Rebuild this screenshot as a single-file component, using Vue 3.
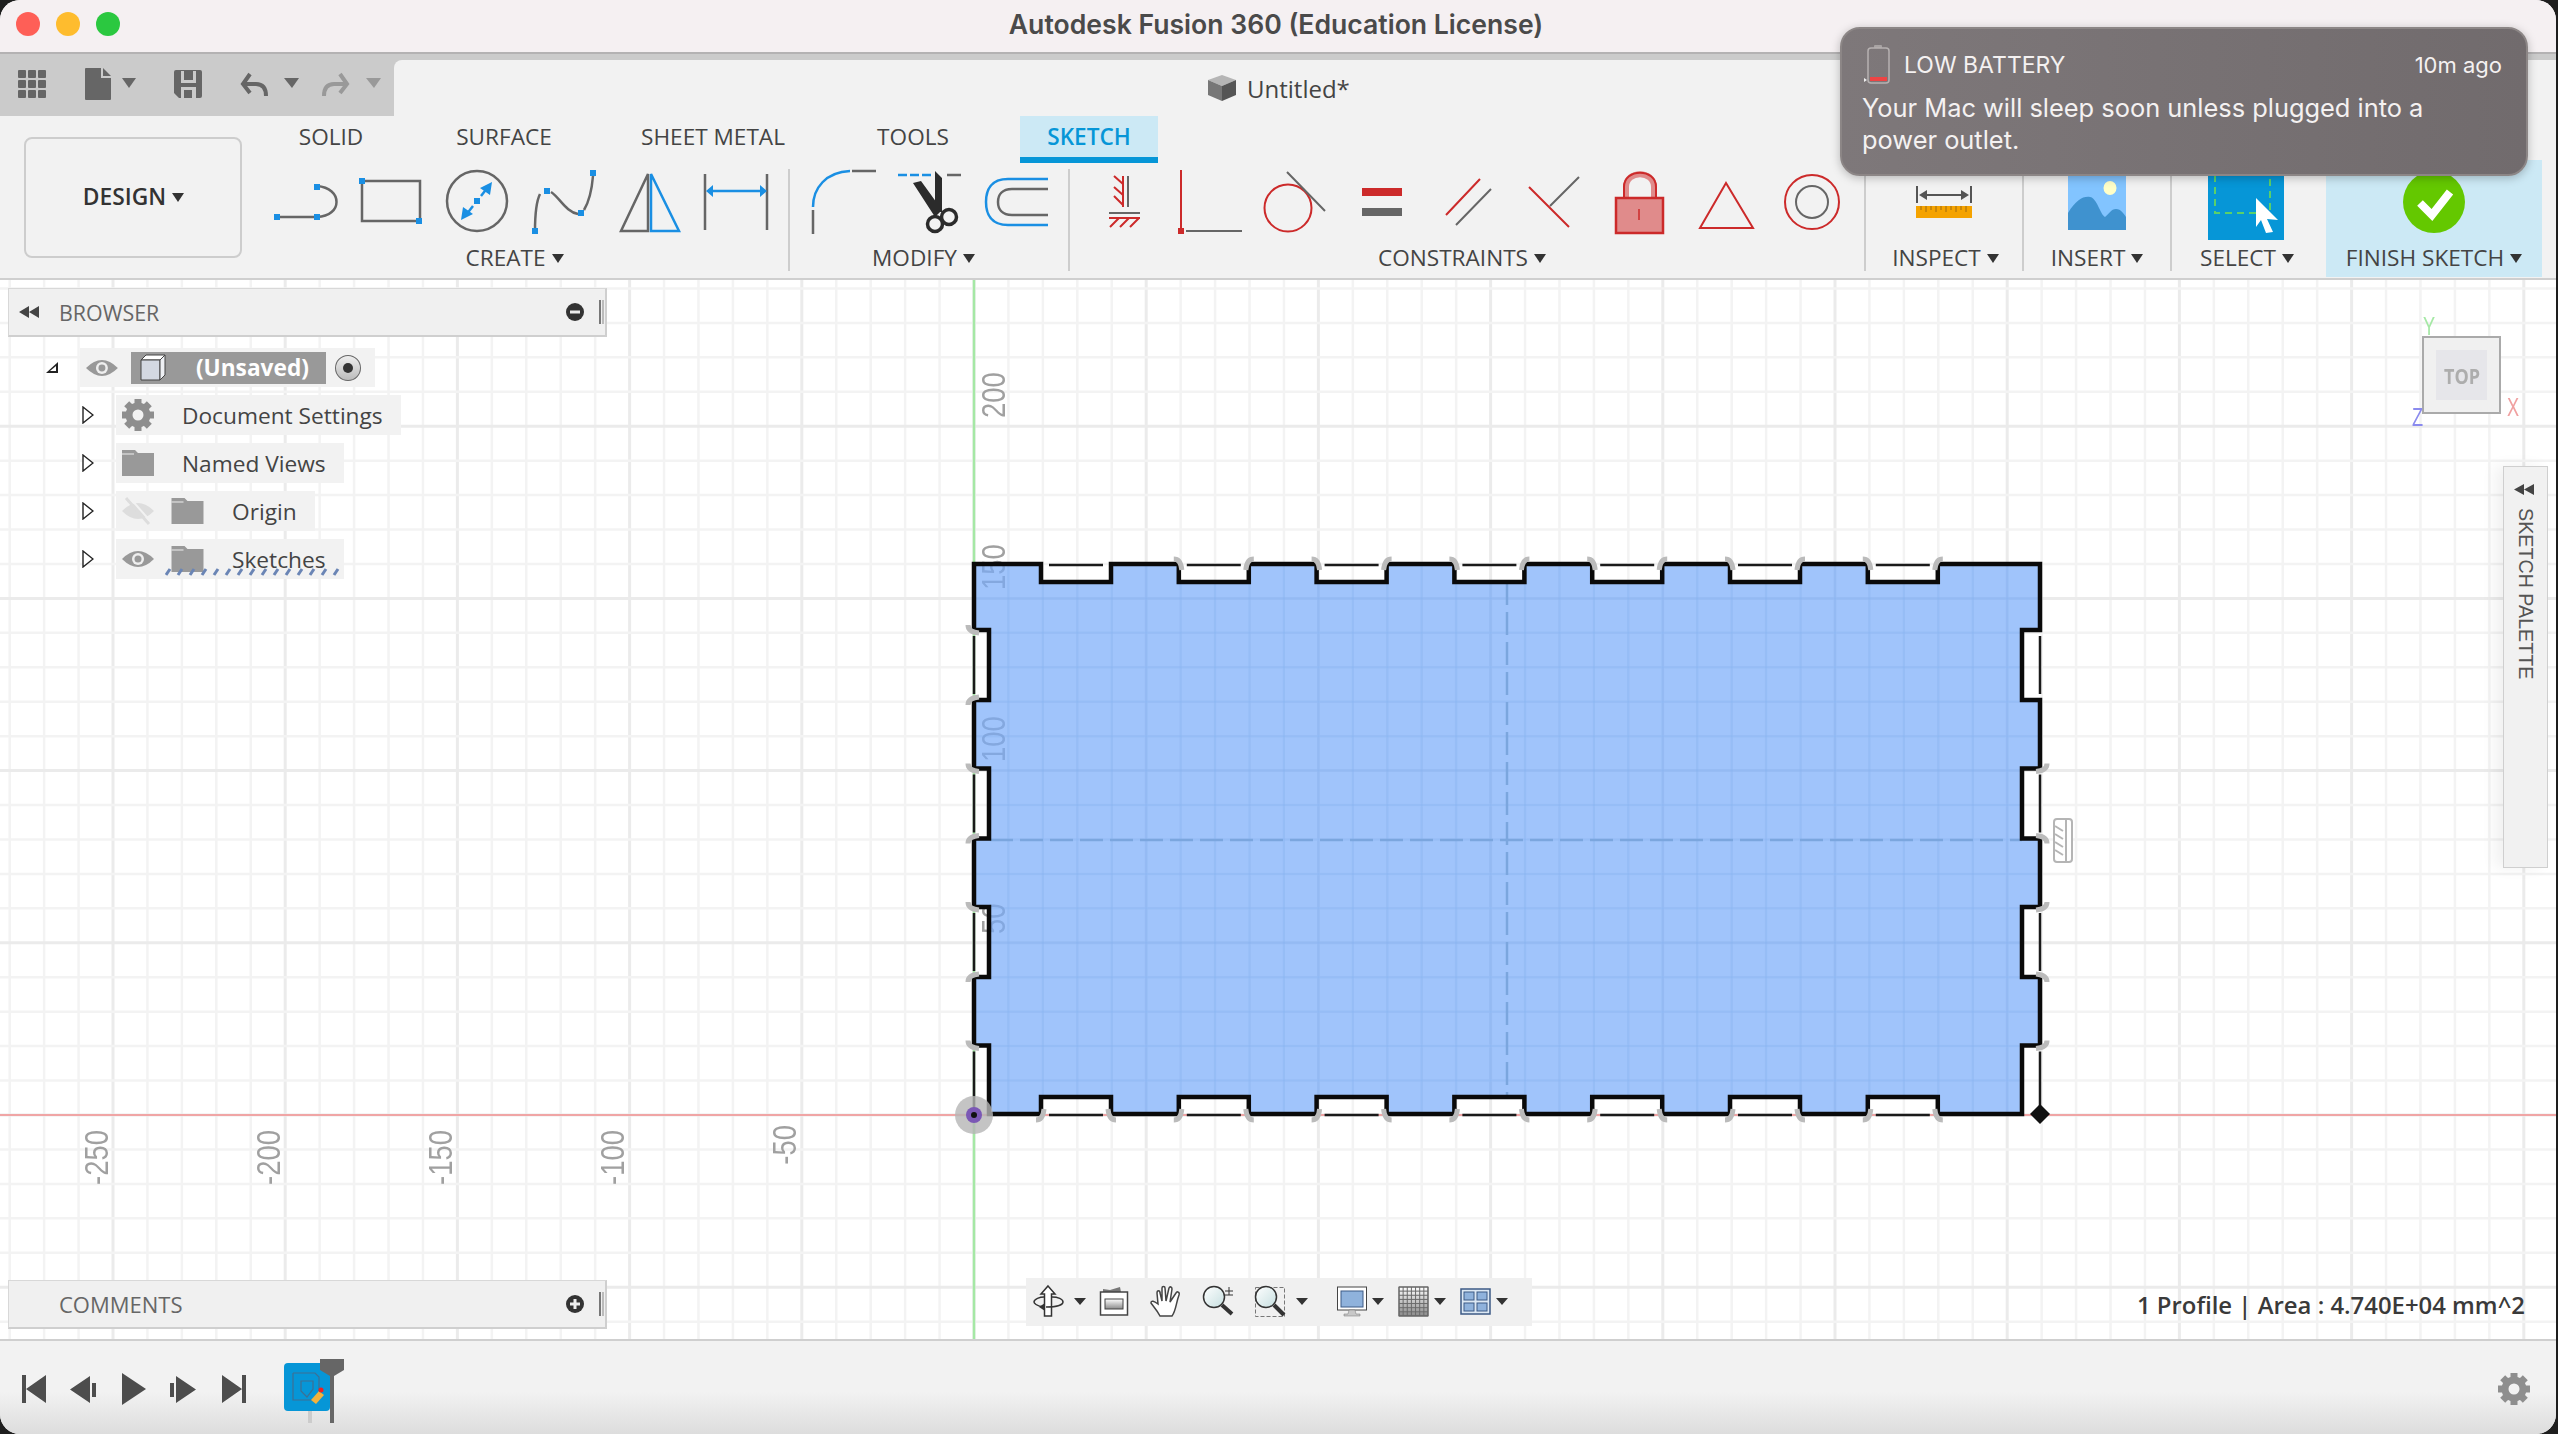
<script setup>
const ORIGIN_X = 974
const ORIGIN_Y = 1115
const STEP = 34.44

const gridX = []
for (let i = -29; i <= 46; i++) gridX.push({ p: ORIGIN_X + i * STEP, major: i % 5 === 0 })
const gridY = []
for (let i = -24; i <= 7; i++) gridY.push({ p: ORIGIN_Y + i * STEP, major: i % 5 === 0 })

const T = 564, B = 1114, L = 974, R = 2040
const topX = [0, 1, 2, 3, 4, 5, 6].map((i) => 1041 + i * 137.8)
const sideY = [630, 768.5, 907, 1045.5]
let d = `M${L} ${T}`
for (const x of topX) d += `L${x} ${T}L${x} ${T + 18}L${x + 70} ${T + 18}L${x + 70} ${T}`
d += `L${R} ${T}`
sideY.forEach((y, i) => {
  d += `L${R} ${y}L${R - 18} ${y}`
  if (i < 3) d += `L${R - 18} ${y + 70}L${R} ${y + 70}`
})
d += `L${R - 18} ${B}`
for (const x of [...topX].reverse()) d += `L${x + 70} ${B}L${x + 70} ${B - 17}L${x} ${B - 17}L${x} ${B}`
d += `L${L + 15} ${B}`
;[...sideY].reverse().forEach((y, i) => {
  if (i > 0) d += `L${L} ${y + 70}L${L + 15} ${y + 70}`
  d += `L${L + 15} ${y}L${L} ${y}`
})
d += 'Z'
const profile = d

let thin = ''
for (const x of topX) thin += `M${x + 8} ${T + 1}H${x + 62}M${x + 8} ${B + 1}H${x + 62}`
sideY.forEach((y, i) => {
  const end = i === 3 ? B : y + 64
  thin += `M${L} ${y + 6}V${end}M${R} ${y + 6}V${end}`
})

let arcs = ''
topX.forEach((x, i) => {
  if (i > 0) arcs += `M${x - 5} ${T - 5}q7 0 8 11M${x + 67} ${T + 6}q1 -11 8 -11`
  arcs += `M${x - 5} ${B + 6}q7 0 8 -11M${x + 67} ${B - 5}q1 11 8 11`
})
sideY.forEach((y, i) => {
  arcs += `M${L - 6} ${y - 5}q0 7 11 8`
  if (i < 3) arcs += `M${L - 6} ${y + 75}q0 -7 11 -8`
  if (i > 0) arcs += `M${R + 7} ${y - 5}q0 7 -11 8`
  if (i > 0 && i < 3) arcs += `M${R + 7} ${y + 75}q0 -7 -11 -8`
})

const yLabels = [
  { t: '200', y: 427 - 9 },
  { t: '150', y: 599 - 9 },
  { t: '100', y: 771 - 9 },
  { t: '50', y: 943 - 9 },
]
const xLabels = [
  { t: '-250', x: 108, y: 1130 },
  { t: '-200', x: 280, y: 1130 },
  { t: '-150', x: 452, y: 1130 },
  { t: '-100', x: 624, y: 1130 },
  { t: '-50', x: 796, y: 1125 },
]
const waves = Array.from({ length: 15 }, (_, i) => i * 12)
const teeth = [0, 45, 90, 135, 180, 225, 270, 315]
const gridCells = [0, 1, 2, 3, 4, 5, 6, 7]
const tabs = ['SOLID', 'SURFACE', 'SHEET METAL', 'TOOLS']
</script>

<template>
  <div class="window">
    <header class="titlebar">
      <i class="light red"></i><i class="light amber"></i><i class="light green"></i>
      <span class="title">Autodesk Fusion 360 (Education License)</span>
    </header>

    <div class="strip">
      <svg class="quick" width="394" height="64" viewBox="0 52 394 64">
        <g fill="#666">
          <rect x="18" y="70" width="8" height="8" rx="1" /><rect x="28" y="70" width="8" height="8" rx="1" /><rect x="38" y="70" width="8" height="8" rx="1" />
          <rect x="18" y="80" width="8" height="8" rx="1" /><rect x="28" y="80" width="8" height="8" rx="1" /><rect x="38" y="80" width="8" height="8" rx="1" />
          <rect x="18" y="90" width="8" height="8" rx="1" /><rect x="28" y="90" width="8" height="8" rx="1" /><rect x="38" y="90" width="8" height="8" rx="1" />
          <path d="M86 68h15v10h10v21a1 1 0 0 1-1 1H86a1 1 0 0 1-1-1V69a1 1 0 0 1 1-1zM103 68l8 8h-8z" />
          <path d="M122 78h14l-7 10z" />
          <path fill-rule="evenodd" d="M176 70h24a2 2 0 0 1 2 2v24a2 2 0 0 1-2 2h-21l-5-5V72a2 2 0 0 1 2-2zM181 71v12h15V71h-3v9h-9v-9zM181 98h15V87h-15zM184 98v-8h8v8z" />
          <path d="M284 78h15l-7 10z" />
        </g>
        <path d="M250 74l-7 10 7 9M244 84h12c7 0 10 4 10 12" fill="none" stroke="#666" stroke-width="4" />
        <g fill="none" stroke="#999" stroke-width="4"><path d="M340 74l7 10-7 9M346 84h-12c-7 0-10 4-10 12" /></g>
        <path d="M366 78h15l-7 10z" fill="#999" />
      </svg>
      <div class="doc-tab">
        <svg width="32" height="30" viewBox="0 0 32 30">
          <path d="M2 7l14-5 14 5-14 6z" fill="#b5b5b5" />
          <path d="M2 7l14 6v15L2 22z" fill="#777" />
          <path d="M30 7L16 13v15l14-6z" fill="#555" />
        </svg>
        <span>Untitled*</span>
      </div>
    </div>

    <section class="ribbon">
      <button class="design">DESIGN<i class="caret"></i></button>
      <div class="ribbon-main">
        <nav class="tabs">
          <span v-for="t in tabs" :key="t" class="tab">{{ t }}</span>
          <span class="active">SKETCH</span>
        </nav>
        <div class="groups">
          <div class="group w-create">
            <svg width="526" height="80" viewBox="262 163 526 80">
              <g fill="none" stroke="#666" stroke-width="2.5">
                <path d="M277 217H317M317 186C343 188 343 216 317 217" />
                <path d="M362 181H420V221H362Z" />
                <ellipse cx="477" cy="201" rx="30" ry="30" />
                <path d="M535 231C535 215 537 200 540 194M551 192C560 198 566 212 578 214M584 210C590 200 592 188 593 176" />
                <path d="M648 174L621 231H648Z" />
                <path d="M705 174V230M767 174V230" />
              </g>
              <g fill="none" stroke="#1a8fe3" stroke-width="2.5">
                <path d="M651 174L679 231H651Z" />
                <path d="M709 191H763" />
                <path d="M466 215L473 206M481 196L488 187" />
              </g>
              <g fill="#1a8fe3">
                <path d="M706 191l7-6v12zM767 191l-7-6v12zM492 182l-2 13-10-7zM461 220l2-13 10 7z" />
                <rect x="274" y="214" width="6" height="6" /><rect x="314" y="214" width="6" height="6" /><rect x="314" y="184" width="6" height="6" />
                <rect x="359" y="178" width="6" height="6" /><rect x="416" y="218" width="6" height="6" />
                <rect x="474" y="198" width="6" height="6" />
                <rect x="532" y="228" width="6" height="6" /><rect x="544" y="188" width="6" height="6" /><rect x="578" y="210" width="6" height="6" /><rect x="590" y="170" width="6" height="6" />
              </g>
            </svg>
            <span class="label pr21">CREATE<i class="caret"></i></span>
          </div>
          <i class="sep"></i>
          <div class="group w-modify">
            <svg width="278" height="80" viewBox="790 163 278 80">
              <path d="M813 207C813 188 826 172 850 171" fill="none" stroke="#1a8fe3" stroke-width="2.5" />
              <path d="M813 210V234M852 171H876" fill="none" stroke="#666" stroke-width="2.5" />
              <path d="M898 175H931" stroke="#1a8fe3" stroke-width="2.5" stroke-dasharray="9 3" fill="none" />
              <path d="M947 175H961" stroke="#666" stroke-width="2.5" />
              <path d="M935 171L942 178L942 212L935 212ZM913 183L921 181L942 210L935 217Z" fill="#2b2b2b" />
              <circle cx="935" cy="224" r="7.500" fill="none" stroke="#2b2b2b" stroke-width="3.500" />
              <circle cx="949" cy="217" r="7.500" fill="none" stroke="#2b2b2b" stroke-width="3.500" />
              <path d="M1048 179H1008C991 179 986 190 986 202C986 214 991 225 1008 225H1048" fill="none" stroke="#1a8fe3" stroke-width="2.5" />
              <path d="M1048 189H1012C1002 189 998 195 998 202C998 209 1002 215 1012 215H1048" fill="none" stroke="#666" stroke-width="2.5" />
            </svg>
            <span class="label pr11">MODIFY<i class="caret"></i></span>
          </div>
          <i class="sep"></i>
          <div class="group w-constraints">
            <svg width="794" height="80" viewBox="1070 163 794 80">
              <g fill="none" stroke="#cc2a2a" stroke-width="2">
                <path d="M1123 176V207M1114 176L1123 184M1114 187L1123 195M1114 196L1123 205" />
                <path d="M1109 218H1140M1119 218L1110 227M1129 218L1120 227M1139 218L1130 227" />
                <path d="M1181 170V228" />
                <circle cx="1288" cy="208" r="23.5" />
                <path d="M1480 179L1446 215M1529 187L1569 227" />
                <path d="M1726 183L1700 228H1753Z" />
                <circle cx="1812" cy="202" r="27" />
              </g>
              <g fill="none" stroke="#666" stroke-width="2">
                <path d="M1128 176V207M1109 213H1140M1186 231H1242M1287 172L1325 211" />
                <path d="M1491 189L1456 225M1579 177L1550 206" />
                <circle cx="1812" cy="202" r="16" />
              </g>
              <rect x="1178" y="228" width="6" height="6" fill="#cc2a2a" />
              <rect x="1362" y="188" width="40" height="8" fill="#cc2a2a" />
              <rect x="1362" y="208" width="40" height="8" fill="#666" />
              <path d="M1626 199V187C1626 170 1654 170 1654 187V199" fill="none" stroke="#e08b8b" stroke-width="6" />
              <path d="M1624 199V187C1624 168 1656 168 1656 187V199" fill="none" stroke="#cc2a2a" stroke-width="2" />
              <rect x="1616" y="198" width="47" height="35" fill="#e08b8b" stroke="#cc2a2a" stroke-width="2.5" />
              <path d="M1639 209V220" stroke="#cc2a2a" stroke-width="1.5" />
            </svg>
            <span class="label pr10">CONSTRAINTS<i class="caret"></i></span>
          </div>
          <i class="sep"></i>
          <div class="group w-inspect">
            <svg width="156" height="80" viewBox="1866 163 156 80">
              <path d="M1917 186V203M1971 186V203M1922 195H1966" stroke="#555" stroke-width="2" fill="none" />
              <path d="M1919 195l8-5v10zM1969 195l-8-5v10z" fill="#555" />
              <rect x="1916" y="206" width="56" height="12" fill="#f5a300" />
              <path d="M1921 206v4M1926 206v6M1931 206v4M1936 206v6M1941 206v4M1946 206v6M1951 206v4M1956 206v6M1961 206v4M1966 206v6" stroke="#9c6b12" stroke-width="1" />
            </svg>
            <span class="label pl3">INSPECT<i class="caret"></i></span>
          </div>
          <i class="sep"></i>
          <div class="group w-insert">
            <svg width="146" height="80" viewBox="2024 163 146 80">
              <rect x="2068" y="163" width="58" height="67" fill="#82c4ff" />
              <path d="M2068 213C2076 200 2083 196 2090 197C2097 198 2100 214 2105 217C2109 214 2111 209 2116 209C2121 209 2124 214 2126 217V230H2068Z" fill="#3f92cf" />
              <ellipse cx="2110" cy="188" rx="6.5" ry="7" fill="#ffffc8" />
            </svg>
            <span class="label">INSERT<i class="caret"></i></span>
          </div>
          <i class="sep"></i>
          <div class="group w-select">
            <svg width="154" height="80" viewBox="2172 163 154 80">
              <rect x="2208" y="163" width="76" height="77" fill="#0696d7" />
              <path d="M2215 163V213H2270V163" fill="none" stroke="#5ad06a" stroke-width="2" stroke-dasharray="7 5" />
              <path d="M2256 198L2278 220L2267 219L2273 232L2266 233L2261 220L2256 227Z" fill="#fff" />
            </svg>
            <span class="label pr4">SELECT<i class="caret"></i></span>
          </div>
          <div class="group finish">
            <svg width="216" height="83" viewBox="2326 160 216 83">
              <circle cx="2434" cy="202" r="31" fill="#64c800" />
              <path d="M2420 203L2432 215L2450 192" fill="none" stroke="#fff" stroke-width="8" />
            </svg>
            <span class="label">FINISH SKETCH<i class="caret"></i></span>
          </div>
        </div>
      </div>
    </section>

    <main class="canvas">
      <svg class="scene" width="2558" height="1059" viewBox="0 280 2558 1059">
        <defs>
          <clipPath id="profile-clip"><path :d="profile" /></clipPath>
        </defs>
        <g>
          <path v-for="g in gridX" :key="'x' + g.p" :d="`M${g.p} 280V1339`" :stroke="g.major ? '#ebebeb' : '#f3f3f3'" :stroke-width="g.major ? 3 : 2.5" />
          <path v-for="g in gridY" :key="'y' + g.p" :d="`M0 ${g.p}H2558`" :stroke="g.major ? '#ebebeb' : '#f3f3f3'" :stroke-width="g.major ? 3 : 2.5" />
        </g>
        <path d="M974 280V1339" stroke="#a5e8a5" stroke-width="2.5" />
        <path d="M0 1115H2558" stroke="#f0a5a5" stroke-width="2" />
        <text v-for="l in yLabels" :key="l.t" class="axis" text-anchor="start" :transform="`translate(1005 ${l.y}) rotate(-90) scale(1 1.18)`">{{ l.t }}</text>
        <text v-for="l in xLabels" :key="l.t" class="axis" text-anchor="end" :transform="`translate(${l.x} ${l.y}) rotate(-90) scale(1 1.18)`">{{ l.t }}</text>

        <path :d="profile" fill="#77abf9" fill-opacity=".7" />
        <g clip-path="url(#profile-clip)" stroke="#6f9fe4" stroke-opacity=".13" stroke-width="2">
          <path v-for="g in gridX" :key="'cx' + g.p" :d="`M${g.p} 280V1339`" />
          <path v-for="g in gridY" :key="'cy' + g.p" :d="`M0 ${g.p}H2558`" />
        </g>
        <path d="M1507 582V1097M990 840H2022" stroke="#7ba6de" stroke-width="2.5" stroke-dasharray="23 7" fill="none" />
        <path :d="thin" stroke="#1a1a1a" stroke-width="2.5" fill="none" />
        <path :d="profile" stroke="#0a0a0a" stroke-width="4.500" fill="none" />
        <path :d="arcs" stroke="#bbbbbb" stroke-width="5" fill="none" />

        <circle cx="974" cy="1115" r="19" fill="#b5b5b5" fill-opacity=".8" />
        <circle cx="974" cy="1115" r="8" fill="#7b58b5" />
        <circle cx="974" cy="1115" r="3" fill="#111" />
        <path d="M2040 1104l10 10-10 10-10-10z" fill="#111" />

        <rect x="2054" y="819" width="18" height="43" rx="3" fill="#fff" stroke="#b5b5b5" stroke-width="2" />
        <path d="M2066 820V861M2055 826l8 5M2055 834l8 5M2055 842l8 5M2055 850l8 5" stroke="#b5b5b5" stroke-width="2" fill="none" />

        <text class="axis-l y" transform="translate(2423 335) scale(.7 1)">Y</text>
        <rect x="2423" y="337" width="77" height="76" fill="#f0f0f0" stroke="#aaa" stroke-width="2" />
        <rect x="2436" y="350" width="51" height="50" fill="#e6e6ea" />
        <text class="cube" text-anchor="middle" transform="translate(2462 384) scale(.9 1.1)">TOP</text>
        <text class="axis-l x" transform="translate(2507 416) scale(.7 1)">X</text>
        <text class="axis-l z" transform="translate(2412 426) scale(.7 1)">Z</text>
      </svg>

      <aside class="browser">
        <div class="panel-head">
          <svg width="22" height="12" viewBox="0 0 22 12"><path d="M11 0v12L1 6zM21 0v12L11 6z" fill="#444" /></svg>
          <span class="panel-title">BROWSER</span>
          <svg class="pin-btn" width="18" height="18" viewBox="0 0 18 18"><circle cx="9" cy="9" r="9" fill="#333" /><rect x="4" y="7.5" width="10" height="3" fill="#eee" /></svg>
          <i class="grip"></i>
        </div>
        <div class="tree">
          <div class="row root">
            <svg class="toggle-root" width="14" height="13" viewBox="0 0 14 13"><path d="M13 1V12H1Z" fill="#222" /><path d="M11 5V10H5Z" fill="#fff" /></svg>
            <div class="chip chip-root">
              <svg width="32" height="20" viewBox="0 0 32 20"><path d="M0 10Q16-6 32 10Q16 26 0 10Z" fill="#999" /><circle cx="16" cy="10" r="6" fill="#eee" /><circle cx="16" cy="10" r="3.5" fill="#999" /></svg>
              <div class="selected">
                <svg width="27" height="27" viewBox="0 0 27 27"><path d="M1 6l5-5h19l-5 5z" fill="#fff" stroke="#444" /><path d="M1 6h19v20H1z" fill="#d3d8e2" stroke="#444" /><path d="M20 6l5-5v20l-5 5z" fill="#eef0f4" stroke="#444" /></svg>
                <b>(Unsaved)</b>
              </div>
              <span class="radio"><i></i></span>
            </div>
          </div>
          <div class="row">
            <svg class="toggle" width="12" height="18" viewBox="0 0 12 18"><path d="M1 1L11 9L1 17Z" fill="#fff" stroke="#222" stroke-width="1.4" /></svg>
            <div class="chip">
              <svg width="32" height="32" viewBox="-16 -16 32 32">
                <rect v-for="a in teeth" :key="a" x="-3.5" y="-16" width="7" height="8" fill="#8e8e8e" :transform="`rotate(${a})`" />
                <circle r="9" fill="none" stroke="#8e8e8e" stroke-width="7" />
              </svg>
              <span class="txt gap28">Document Settings</span>
            </div>
          </div>
          <div class="row">
            <svg class="toggle" width="12" height="18" viewBox="0 0 12 18"><path d="M1 1L11 9L1 17Z" fill="#fff" stroke="#222" stroke-width="1.4" /></svg>
            <div class="chip">
              <svg width="32" height="26" viewBox="0 0 32 26"><path d="M0 0h13l3 3h16v23H0z" fill="#999" /><path d="M0 4h12" stroke="#eee" stroke-width="1" /></svg>
              <span class="txt gap28">Named Views</span>
            </div>
          </div>
          <div class="row">
            <svg class="toggle" width="12" height="18" viewBox="0 0 12 18"><path d="M1 1L11 9L1 17Z" fill="#fff" stroke="#222" stroke-width="1.4" /></svg>
            <div class="chip">
              <svg width="32" height="28" viewBox="0 0 32 28"><path d="M0 14Q16-2 32 14Q16 30 0 14Z" fill="#ddd" /><path d="M4 1L27 27" stroke="#ddd" stroke-width="3" /><path d="M7 0L30 26" stroke="#f2f2f2" stroke-width="2" /></svg>
              <svg class="folder2" width="33" height="26" viewBox="0 0 32 26"><path d="M0 0h13l3 3h16v23H0z" fill="#999" /><path d="M0 4h12" stroke="#eee" stroke-width="1" /></svg>
              <span class="txt gap28">Origin</span>
            </div>
          </div>
          <div class="row">
            <svg class="toggle" width="12" height="18" viewBox="0 0 12 18"><path d="M1 1L11 9L1 17Z" fill="#fff" stroke="#222" stroke-width="1.4" /></svg>
            <div class="chip sketches">
              <svg width="32" height="20" viewBox="0 0 32 20"><path d="M0 10Q16-6 32 10Q16 26 0 10Z" fill="#999" /><circle cx="16" cy="10" r="6" fill="#eee" /><circle cx="16" cy="10" r="3.5" fill="#999" /></svg>
              <svg class="folder2" width="33" height="26" viewBox="0 0 32 26"><path d="M0 0h13l3 3h16v23H0z" fill="#999" /><path d="M0 4h12" stroke="#eee" stroke-width="1" /></svg>
              <span class="txt gap28">Sketches</span>
              <svg class="wavy" width="180" height="8" viewBox="0 0 180 8"><path v-for="w in waves" :key="w" :d="`M${w + 1} 7L${w + 5} 1`" stroke="#6a85b5" stroke-width="3" /></svg>
            </div>
          </div>
        </div>
      </aside>

      <aside class="comments">
        <div class="panel-head">
          <span class="panel-title no-arrow">COMMENTS</span>
          <svg class="pin-btn" width="18" height="18" viewBox="0 0 18 18"><circle cx="9" cy="9" r="9" fill="#333" /><rect x="4" y="7.5" width="10" height="3" fill="#eee" /><rect x="7.5" y="4" width="3" height="10" fill="#eee" /></svg>
          <i class="grip"></i>
        </div>
      </aside>

      <aside class="palette">
        <svg width="20" height="11" viewBox="0 0 20 11"><path d="M10 0v11L0 5.5zM20 0v11L10 5.5z" fill="#444" /></svg>
        <span>SKETCH PALETTE</span>
      </aside>

      <div class="navbar">
        <svg width="506" height="48" viewBox="1026 1278 506 48">
          <defs>
            <linearGradient id="lens" x1="0" y1="0" x2="1" y2="1"><stop offset="0" stop-color="#fff" /><stop offset="1" stop-color="#c6dfe0" /></linearGradient>
            <linearGradient id="plate" x1="0" y1="0" x2="0" y2="1"><stop offset="0" stop-color="#fff" /><stop offset="1" stop-color="#8a8a8a" /></linearGradient>
          </defs>
          <path d="M1048 1286l7 8h-3.500v22h-7v-22H1041z" fill="#fff" stroke="#333" stroke-width="1.500" />
          <path d="M1044 1307C1036 1306 1034 1303 1034 1302C1034 1299 1040 1297 1044 1297M1052 1297C1058 1297 1063 1299 1063 1302C1063 1305 1056 1307 1046 1307" fill="none" stroke="#333" stroke-width="1.500" />
          <path d="M1039 1307l6-4v8z" fill="#333" />
          <path d="M1103 1292l0-3 7 1 10-3 1 5z" fill="#777" />
          <rect x="1100.500" y="1292" width="27" height="23" fill="#fff" stroke="#444" stroke-width="1.500" />
          <rect x="1105" y="1299" width="18" height="10" fill="url(#plate)" stroke="#444" />
          <path d="M1160 1316C1157 1310 1153 1306 1151 1303C1151 1300 1154 1301 1158 1304L1157 1293C1157 1290 1160 1290 1160 1293L1162 1301L1162 1288C1162 1286 1165 1286 1165 1288L1166 1301L1169 1288C1170 1286 1172 1287 1172 1289L1170 1302L1176 1293C1177 1291 1180 1292 1179 1295C1176 1303 1176 1311 1172 1316Z" fill="#fff" stroke="#444" stroke-width="1.500" />
          <circle cx="1214" cy="1297" r="10.500" fill="url(#lens)" stroke="#333" stroke-width="1.500" />
          <path d="M1222 1305L1232 1314" stroke="#333" stroke-width="4" />
          <path d="M1225 1291h8M1229 1287v8M1225 1295h8" stroke="#333" stroke-width="1" fill="none" />
          <rect x="1255.500" y="1287.500" width="29" height="29" fill="none" stroke="#777" stroke-dasharray="4 2" />
          <circle cx="1266" cy="1297" r="10.500" fill="url(#lens)" stroke="#333" stroke-width="1.500" />
          <path d="M1274 1305L1284 1315" stroke="#333" stroke-width="4" />
          <rect x="1337.500" y="1287" width="29" height="23" fill="#fff" stroke="#444" />
          <rect x="1341" y="1291" width="22" height="16" fill="#8fb2dc" stroke="#3d5a85" />
          <path d="M1349 1310h6l1 4h4v2h-16v-2h4z" fill="#c8c8c8" stroke="#777" stroke-width=".5" />
          <rect x="1399" y="1287" width="29" height="29" fill="url(#plate)" stroke="#555" />
          <path v-for="c in gridCells" :key="'v' + c" :d="`M${1399 + c * 4.14} 1287v29M1399 ${1287 + c * 4.14}h29`" stroke="#6a6a6a" stroke-width="1" />
          <rect x="1461" y="1289" width="29" height="25" fill="#dce8f4" stroke="#3d5a85" stroke-width="1.500" />
          <rect x="1464" y="1292" width="10" height="8" fill="#8fb2dc" stroke="#3d5a85" /><rect x="1477" y="1292" width="10" height="8" fill="#8fb2dc" stroke="#3d5a85" />
          <rect x="1464" y="1303" width="10" height="8" fill="#8fb2dc" stroke="#3d5a85" /><rect x="1477" y="1303" width="10" height="8" fill="#8fb2dc" stroke="#3d5a85" />
          <g fill="#333">
            <path d="M1074 1298h12l-6 7zM1296 1298h12l-6 7zM1372 1298h12l-6 7zM1434 1298h12l-6 7zM1496 1298h12l-6 7z" />
          </g>
        </svg>
      </div>

      <div class="status">1 Profile | Area : 4.740E+04 mm^2</div>
    </main>

    <footer class="timeline">
      <svg width="360" height="94" viewBox="0 1340 360 94">
        <g fill="#4d4d4d">
          <path d="M22 1374h4v28h-4zM46 1374v28l-20-14z" />
          <path d="M90 1375v27l-20-13.500zM92 1382h4v14h-4z" />
          <path d="M122 1372l24 16-24 16z" />
          <path d="M170 1382h4v14h-4zM176 1375v27l20-13.500z" />
          <path d="M222 1374v28l20-14zM242 1374h4v28h-4z" />
        </g>
        <rect x="284" y="1362" width="46" height="48" rx="4" fill="#0696d7" />
        <rect x="308" y="1410" width="4" height="12" fill="#ccc" />
        <path d="M293 1372h22l4 4v14M293 1372v27h20M301 1380v10l6 6 6-8v-8z" fill="none" stroke="#3f6f93" stroke-width="1.200" />
        <path d="M311 1399l8-9 5 4-8 9z" fill="#f3b23c" />
        <circle cx="321" cy="1389" r="2.500" fill="#ee2222" />
        <path d="M320 1358h24v11l-10 6h-4l-10-6z" fill="#666" />
        <rect x="330" y="1374" width="4" height="48" fill="#666" />
      </svg>
      <svg class="settings" width="32" height="32" viewBox="-16 -16 32 32">
        <rect v-for="a in teeth" :key="a" x="-3.500" y="-16" width="7" height="8" fill="#8e8e8e" :transform="`rotate(${a})`" />
        <circle r="9" fill="none" stroke="#8e8e8e" stroke-width="7" />
      </svg>
    </footer>

    <div class="notice">
      <div class="notice-head">
        <svg width="26" height="40" viewBox="0 0 26 40">
          <rect x="10" y="0" width="8" height="3" rx="1" fill="#a8a3a3" />
          <rect x="4" y="3" width="21" height="35" rx="3" fill="none" stroke="#b6b1b1" stroke-width="1.500" />
          <rect x="6" y="32" width="17" height="4" fill="#ee4444" />
          <path d="M0 33l3 2-3 2z" fill="#eee" />
        </svg>
        <span class="notice-title">LOW BATTERY</span>
        <span class="notice-time">10m ago</span>
      </div>
      <p>Your Mac will sleep soon unless plugged into a power outlet.</p>
    </div>
  </div>
</template>

<style>
html, body { margin: 0; background: #1e1e1e; overflow: hidden; }
</style>

<style scoped>
.window {
  position: relative;
  display: flex;
  flex-direction: column;
  width: 2556px;
  height: 1434px;
  border-radius: 20px;
  overflow: hidden;
  background: #f2f2f2;
  font-family: "Open Sans", sans-serif;
  color: #444;
}
.titlebar {
  display: flex;
  align-items: center;
  height: 48px;
  padding: 0 0 4px 16px;
  gap: 16px;
  background: #f5f0f2;
  border-bottom: 2px solid #b4b2b3;
  box-sizing: content-box;
  position: relative;
  flex: none;
  margin-bottom: -2px;
}
.light { width: 24px; height: 24px; border-radius: 50%; }
.red { background: #fe5f57; }
.amber { background: #febc2e; }
.green { background: #2bc840; }
.title {
  position: absolute;
  left: 0;
  width: 2552px;
  text-align: center;
  font: 600 26.6px "Inter", sans-serif;
  color: #4a4a4a;
}
.strip {
  display: flex;
  flex: none;
  height: 64px;
  background: #cbcbcb;
}
.quick { flex: none; }
.doc-tab {
  flex: 1;
  margin-top: 8px;
  border-radius: 8px 0 0 0;
  background: #f2f2f2;
  display: flex;
  align-items: center;
  gap: 9px;
  padding-left: 812px;
  font-size: 24px;
  color: #444;
}
.ribbon {
  flex: none;
  display: flex;
  height: 164px;
  background: #f2f2f2;
  border-bottom: 2px solid #cfcfcf;
  box-sizing: border-box;
}
.design {
  flex: none;
  width: 218px;
  height: 121px;
  margin: 21px 20px 0 24px;
  padding: 0 0 3px 1px;
  border: 2px solid #cdcdcd;
  border-radius: 8px;
  background: #f2f2f2;
  font: 600 22.8px "Open Sans", sans-serif;
  color: #333;
}
.caret {
  display: inline-block;
  width: 0;
  height: 0;
  margin-left: 6px;
  vertical-align: 3px;
  border-left: 6px solid transparent;
  border-right: 6px solid transparent;
  border-top: 9px solid #333;
}
.ribbon-main { flex: 1; min-width: 0; }
.tabs {
  display: flex;
  align-items: center;
  height: 47px;
  padding-left: 9px;
}
.tab { font-size: 22.6px; color: #444; line-height: 41px; text-align: center; flex: none; height: 47px; }
.tab:nth-child(1) { width: 120px; }
.tab:nth-child(2) { width: 226px; }
.tab:nth-child(3) { width: 192px; }
.tab:nth-child(4) { width: 208px; }
.active {
  flex: none;
  margin-left: 3px;
  width: 138px;
  height: 47px;
  box-sizing: border-box;
  background: #cce9f5;
  border-bottom: 6px solid #0696d7;
  color: #0696d7;
  font-size: 22.6px;
  font-weight: 600;
  line-height: 41px;
  text-align: center;
}
.groups { display: flex; height: 114px; }
.group { display: flex; flex-direction: column; flex: none; align-items: center; }
.group svg { display: block; flex: none; }
.w-create { width: 526px; }
.w-modify { width: 278px; }
.w-constraints { width: 794px; }
.w-inspect { width: 156px; }
.w-insert { width: 146px; }
.w-select { width: 154px; }
.finish { width: 216px; height: 117px; margin-top: -3px; background: #cce9f5; }
.sep { flex: none; width: 2px; height: 102px; margin-top: 6px; background: #cdcdcd; }
.label { font-size: 22.6px; line-height: 29px; color: #444; white-space: nowrap; }
.label .caret { border-top-color: #333; }
.pr21 { padding-right: 21px; }
.pr11 { padding-right: 11px; }
.pr10 { padding-right: 10px; }
.pr4 { padding-right: 4px; }
.pl3 { padding-left: 3px; }

.canvas { position: relative; flex: 1; min-height: 0; background: #fff; overflow: hidden; }
.scene { position: absolute; left: 0; top: 0; filter: blur(.6px); }
.axis { font: 27.5px "Liberation Sans", sans-serif; fill: #a0a0a0; }
.axis-l { font: 26px "Liberation Sans", sans-serif; }
.axis-l.y { fill: #a5e8a5; }
.axis-l.x { fill: #f0a0a0; }
.axis-l.z { fill: #8a8aee; }
.cube { font: 700 20px "Open Sans", sans-serif; fill: #adadad; }

.browser { position: absolute; left: 8px; top: 8px; width: 599px; }
.comments { position: absolute; left: 8px; top: 1000px; width: 599px; }
.panel-head {
  display: flex;
  align-items: center;
  height: 49px;
  box-sizing: border-box;
  padding-left: 9px;
  background: #f0f0f0;
  border: 1px solid #d8d8d8;
  border-bottom: 2px solid #cfcfcf;
  border-right: 2px solid #cfcfcf;
}
.panel-title { margin-left: 19px; font-size: 21.4px; color: #666; flex: 1; }
.panel-title.no-arrow { margin-left: 41px; font-size: 22px; }
.pin-btn { flex: none; margin-right: 1px; }
.grip {
  flex: none;
  width: 2px;
  height: 24px;
  margin: 0 4px 0 14px;
  background: #777;
  box-shadow: 3px 0 0 #bbb;
}
.tree { display: flex; flex-direction: column; gap: 8px; margin-top: 11px; }
.row { display: flex; align-items: center; height: 40px; padding-left: 74px; gap: 22px; }
.row.root { padding-left: 37px; gap: 21px; height: 39px; }
.toggle, .toggle-root { flex: none; }
.chip {
  position: relative;
  display: flex;
  align-items: center;
  height: 100%;
  padding: 0 18px 0 6px;
  background: #f2f2f2;
}
.chip-root { width: 295px; box-sizing: border-box; padding-right: 14px; }
.selected {
  display: flex;
  align-items: center;
  width: 196px;
  height: 32px;
  margin-left: 13px;
  padding-left: 9px;
  box-sizing: border-box;
  background: #999;
  color: #fff;
  font-size: 22.7px;
}
.selected b { margin-left: 29px; font-weight: 700; }
.radio {
  display: flex;
  align-items: center;
  justify-content: center;
  width: 26px;
  height: 26px;
  margin-left: 9px;
  border-radius: 50%;
  border: 1px solid #666;
  box-sizing: border-box;
  background: linear-gradient(#eee, #bbb);
}
.radio i { width: 10px; height: 10px; border-radius: 50%; background: #333; }
.txt { font-size: 22.7px; color: #444; white-space: nowrap; }
.gap28 { margin-left: 28px; }
.folder2 { margin-left: 17px; }
.wavy { position: absolute; left: 49px; bottom: 3px; }

.palette {
  position: absolute;
  left: 2503px;
  top: 186px;
  width: 45px;
  height: 402px;
  box-sizing: border-box;
  padding-top: 17px;
  display: flex;
  flex-direction: column;
  align-items: center;
  gap: 13px;
  background: #f1f1f1;
  border: 1px solid #cfcfcf;
  box-shadow: -8px 0 14px rgba(0, 0, 0, .06);
}
.palette svg { margin-right: 3px; }
.palette span {
  writing-mode: vertical-rl;
  font: 19.7px "Liberation Sans", sans-serif;
  color: #555;
}
.navbar {
  position: absolute;
  left: 1026px;
  top: 998px;
  width: 506px;
  height: 48px;
  background: #f0f0f0;
}
.navbar svg { display: block; }
.status {
  position: absolute;
  right: 31px;
  top: 1008px;
  font-size: 23.9px;
  font-weight: 600;
  line-height: 34px;
  color: #3a3a3a;
}
.timeline {
  flex: none;
  display: flex;
  justify-content: space-between;
  align-items: center;
  height: 95px;
  box-sizing: border-box;
  border-top: 2px solid #cfcfcf;
  padding-right: 26px;
  background: linear-gradient(#f2f2f2 55%, #dddddd);
}
.settings { margin-top: 3px; }

.notice {
  position: absolute;
  left: 1840px;
  top: 27px;
  width: 688px;
  height: 149px;
  box-sizing: border-box;
  padding: 16px 24px 0 20px;
  border-radius: 20px;
  border: 2px solid #8c8686;
  background: linear-gradient(90deg, #7e787a, #716b6d);
  box-shadow: 0 2px 10px rgba(0, 0, 0, .25);
  color: #f4f1f1;
  font-family: "Inter", sans-serif;
}
.notice-head { display: flex; align-items: center; height: 40px; }
.notice-head svg { flex: none; margin-left: 2px; }
.notice-title { margin-left: 14px; font-size: 23px; flex: 1; }
.notice-time { font-size: 22px; }
.notice p { margin: 7px 0 0; font-size: 25.4px; line-height: 32px; width: 610px; }
</style>
